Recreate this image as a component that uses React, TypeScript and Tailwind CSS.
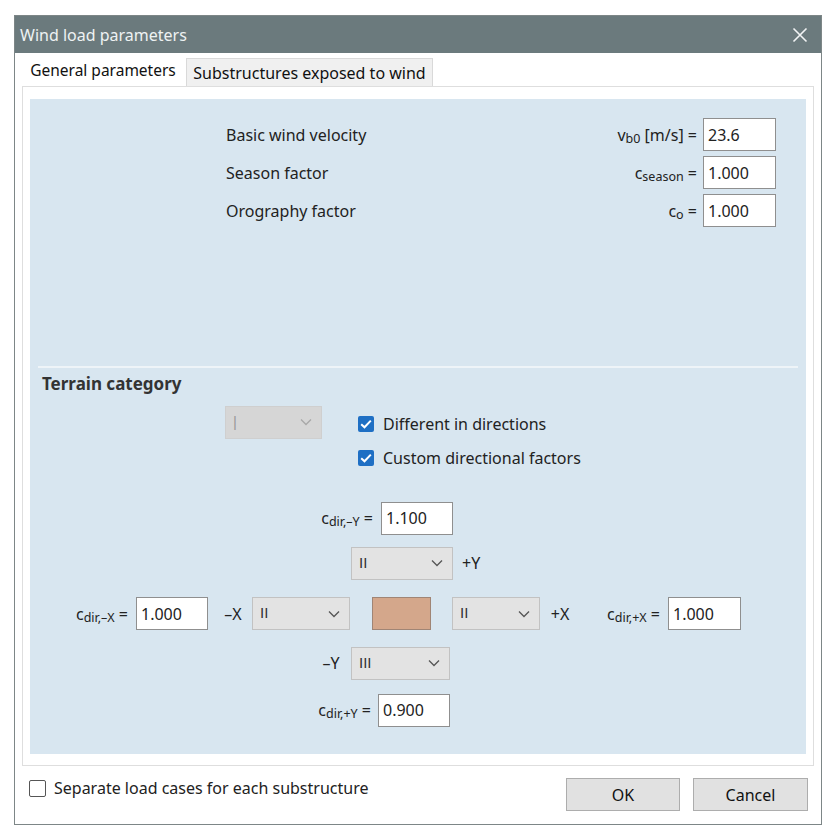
import React from "react";

const font = { fontFamily: '"Noto Sans", "Open Sans", sans-serif' };

function Chevron({ color = "#555" }: { color?: string }) {
  return (
    <svg width="12" height="8" viewBox="0 0 12 8" fill="none">
      <path d="M1 1.5 L6 6.5 L11 1.5" stroke={color} strokeWidth="1.3" />
    </svg>
  );
}

function Select({ value, w, disabled }: { value: string; w: string; disabled?: boolean }) {
  return (
    <div
      className={`flex h-[33px] items-center justify-between border pl-[7px] pr-[9px] ${w} ${
        disabled ? "border-[#cfcfcf] bg-[#d6d6d6] text-[#9a9a9a]" : "border-[#c2c2c2] bg-[#e3e3e3] text-[#333]"
      }`}
    >
      <span className="font-['Liberation_Sans',sans-serif] text-[15px] tracking-[0px]">{value}</span>
      <Chevron color={disabled ? "#a8a8a8" : "#555"} />
    </div>
  );
}

function Input({ value, w = "w-[73px]" }: { value: string; w?: string }) {
  return (
    <div className={`flex h-[33px] items-center border border-[#8f8f8f] bg-white pl-[4px] text-[16px] text-[#222] ${w}`}>
      {value}
    </div>
  );
}

function Sym({ base, sub, tail }: { base: string; sub: string; tail?: string }) {
  return (
    <span className="whitespace-nowrap text-[16px] text-[#222]">
      {base}
      <sub className="relative top-[2px] text-[12.5px]">{sub}</sub>
      {tail ?? " ="}
    </span>
  );
}

function Check({ checked }: { checked: boolean }) {
  return checked ? (
    <div className="flex h-[16px] w-[16px] items-center justify-center rounded-[2px] bg-[#1e6fc4]">
      <svg width="12" height="10" viewBox="0 0 12 10" fill="none">
        <path d="M1.2 5.2 L4.5 8.3 L10.8 1.6" stroke="white" strokeWidth="2" />
      </svg>
    </div>
  ) : (
    <div className="h-[17px] w-[17px] rounded-[2px] border border-[#555] bg-white" />
  );
}

export default function App() {
  return (
    <div className="h-[840px] w-[840px] bg-white pl-[14px] pt-[15px]" style={font}>
      <div className="flex h-[810px] w-[808px] flex-col border border-[#7d8687] bg-white">
        {/* title bar */}
        <div className="flex h-[37px] items-center justify-between bg-[#6b7a7d] pl-[5px] pr-[13px]">
          <span className="text-[16px] text-[#eef2f3]">Wind load parameters</span>
          <svg width="16" height="16" viewBox="0 0 16 16">
            <path d="M1.5 1.5 L14.5 14.5 M14.5 1.5 L1.5 14.5" stroke="#f2f4f5" strokeWidth="1.6" />
          </svg>
        </div>
        {/* tabs */}
        <div className="flex h-[33px] items-end pl-[5px]">
          <div className="flex h-[31px] w-[166px] items-center justify-center bg-white text-[15.5px] text-[#111]">
            General parameters
          </div>
          <div className="flex h-[28px] w-[247px] items-center justify-center border border-b-0 border-[#d9d9d9] bg-[#f0f0f0] text-[16px] text-[#111]">
            Substructures exposed to wind
          </div>
        </div>
        {/* tab panel */}
        <div className="mx-[7px] h-[680px] border border-[#dedede] px-[7px] pb-[11px] pt-[12px]">
          <div className="flex h-full flex-col bg-[#d8e6f0]">
            {/* top params */}
            <div className="flex h-[267px] flex-col gap-[5px] pl-[196px] pr-[30px] pt-[19px]">
              <div className="flex h-[33px] items-center justify-between">
                <span className="text-[16px] text-[#222]">Basic wind velocity</span>
                <div className="flex items-center gap-[6px]">
                  <Sym base="v" sub="b0" tail=" [m/s] =" />
                  <Input value="23.6" />
                </div>
              </div>
              <div className="flex h-[33px] items-center justify-between">
                <span className="text-[16px] text-[#222]">Season factor</span>
                <div className="flex items-center gap-[6px]">
                  <Sym base="c" sub="season" />
                  <Input value="1.000" />
                </div>
              </div>
              <div className="flex h-[33px] items-center justify-between">
                <span className="text-[16px] text-[#222]">Orography factor</span>
                <div className="flex items-center gap-[6px]">
                  <Sym base="c" sub="o" />
                  <Input value="1.000" />
                </div>
              </div>
            </div>
            <div className="mx-[8px] h-[2px] bg-[#eef4f8]" />
            {/* terrain */}
            <div className="pl-[12px] pt-[3px] text-[17px] font-bold text-[#333]">Terrain category</div>
            <div className="mt-[9px] flex pl-[195px]">
              <Select value="|" w="w-[97px]" disabled />
              <div className="ml-[36px] flex flex-col gap-[14px] pt-[8px]">
                <div className="flex items-center gap-[9px]">
                  <Check checked />
                  <span className="text-[16px] leading-[20px] text-[#222]">Different in directions</span>
                </div>
                <div className="flex items-center gap-[9px]">
                  <Check checked />
                  <span className="text-[16px] leading-[20px] text-[#222]">Custom directional factors</span>
                </div>
              </div>
            </div>
            {/* direction cross */}
            <div className="mt-[34px] flex flex-col">
              <div className="flex h-[33px] items-center pl-[260px]">
                <div className="w-[83px] text-right">
                  <Sym base="c" sub="dir,–Y" />
                </div>
                <div className="ml-[8px]">
                  <Input value="1.100" w="w-[72px]" />
                </div>
              </div>
              <div className="mt-[12px] flex h-[33px] items-center pl-[321px]">
                <Select value="II" w="w-[102px]" />
                <span className="ml-[9px] text-[16px] text-[#222]">+Y</span>
              </div>
              <div className="mt-[17px] flex h-[34px] items-center pl-[10px]">
                <div className="w-[88px] text-right">
                  <Sym base="c" sub="dir,–X" />
                </div>
                <div className="ml-[8px]">
                  <Input value="1.000" w="w-[72px]" />
                </div>
                <span className="ml-[6px] w-[38px] text-center text-[16px] text-[#222]">–X</span>
                <Select value="II" w="w-[98px]" />
                <div className="ml-[22px] h-[33px] w-[59px] border border-[#a08575] bg-[#d4a78b]" />
                <div className="ml-[21px]">
                  <Select value="II" w="w-[88px]" />
                </div>
                <span className="w-[40px] text-center text-[16px] text-[#222]">+X</span>
                <div className="w-[80px] text-right">
                  <Sym base="c" sub="dir,+X" />
                </div>
                <div className="ml-[8px]">
                  <Input value="1.000" w="w-[73px]" />
                </div>
              </div>
              <div className="mt-[16px] flex h-[33px] items-center pl-[281px]">
                <span className="w-[40px] text-center text-[16px] text-[#222]">–Y</span>
                <Select value="III" w="w-[99px]" />
              </div>
              <div className="mt-[14px] flex h-[33px] items-center pl-[250px]">
                <div className="w-[91px] text-right">
                  <Sym base="c" sub="dir,+Y" />
                </div>
                <div className="ml-[7px]">
                  <Input value="0.900" w="w-[72px]" />
                </div>
              </div>
            </div>
          </div>
        </div>
        {/* bottom */}
        <div className="flex flex-1 items-start justify-between pl-[14px] pr-[13px] pt-[12px]">
          <div className="mt-[-2px] flex items-center gap-[8px]">
            <Check checked={false} />
            <span className="text-[16px] text-[#222]">Separate load cases for each substructure</span>
          </div>
          <div className="flex gap-[13px]">
            <div className="flex h-[33px] w-[114px] items-center justify-center border border-[#adadad] bg-[#e1e1e1] text-[16px] text-[#111]">
              OK
            </div>
            <div className="flex h-[33px] w-[115px] items-center justify-center border border-[#adadad] bg-[#e1e1e1] text-[16px] text-[#111]">
              Cancel
            </div>
          </div>
        </div>
      </div>
    </div>
  );
}
